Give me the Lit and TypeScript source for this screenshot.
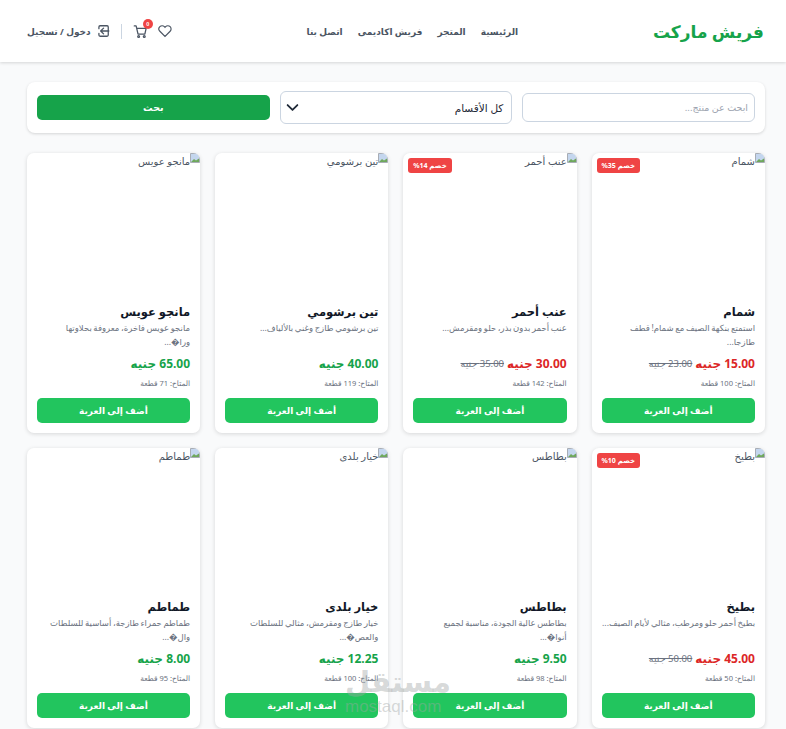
import { LitElement, html, css, svg } from "lit";
import { customElement } from "lit/decorators.js";

interface P { name: string; desc: string; price: string; old?: string; stock: string; badge?: string; }
const items: P[] = [
  { name: "شمام", desc: "استمتع بنكهة الصيف مع شمام! قطف\nطازجا...", price: "15.00 جنيه", old: "23.00 جنيه", stock: "المتاح: 100 قطعة", badge: "خصم 35%" },
  { name: "عنب أحمر", desc: "عنب أحمر بدون بذر، حلو ومقرمش...", price: "30.00 جنيه", old: "35.00 جنيه", stock: "المتاح: 142 قطعة", badge: "خصم 14%" },
  { name: "تين برشومي", desc: "تين برشومي طازج وغني بالألياف...", price: "40.00 جنيه", stock: "المتاح: 119 قطعة" },
  { name: "مانجو عويس", desc: "مانجو عويس فاخرة، معروفة بحلاوتها\nورا�...", price: "65.00 جنيه", stock: "المتاح: 71 قطعة" },
  { name: "بطيخ", desc: "بطيخ أحمر حلو ومرطب، مثالي لأيام الصيف...", price: "45.00 جنيه", old: "50.00 جنيه", stock: "المتاح: 50 قطعة", badge: "خصم 10%" },
  { name: "بطاطس", desc: "بطاطس عالية الجودة، مناسبة لجميع\nأنوا�...", price: "9.50 جنيه", stock: "المتاح: 98 قطعة" },
  { name: "خيار بلدى", desc: "خيار طازج ومقرمش، مثالي للسلطات\nوالعص�...", price: "12.25 جنيه", stock: "المتاح: 100 قطعة" },
  { name: "طماطم", desc: "طماطم حمراء طازجة، أساسية للسلطات\nوال�...", price: "8.00 جنيه", stock: "المتاح: 95 قطعة" },
];

const broken = svg`<svg class="broken" viewBox="0 0 10 10" width="10" height="10"><path d="M0.5 0.5h6.5l2.5 2.5v6.5h-9z" fill="#c4d6ee" stroke="#a8adb5"/><path d="M1 9l3-3 2 1.500 3-2v3.500z" fill="#6fa85c"/></svg>`;

@customElement("app-root")
export class AppRoot extends LitElement {
  static styles = css`
    :host { display: block; background: #f9fafb; font-family: "Noto Sans", "DejaVu Sans", sans-serif; color: #1f2937; position: relative; height: 729px; overflow: hidden; }
    .wrap { direction: rtl; }
    header { height: 62px; background: #fff; box-shadow: 0 1px 3px rgba(0,0,0,.15); display: flex; align-items: center; justify-content: space-between; padding: 0 22px 0 27px; }
    .logo { font-size: 17px; font-weight: 700; color: #16a34a; }
    nav { display: flex; gap: 15px; font-size: 9px; font-weight: 700; color: #4b5563; }
    .tools { display: flex; align-items: center; gap: 10px; color: #4b5563; }
    .tools svg { display: block; }
    .cart { position: relative; width: 15px; height: 15px; }
    .count { position: absolute; top: -5px; right: -5px; width: 10px; height: 10px; border-radius: 50%; background: #ef4444; color: #fff; font-size: 5.500px; line-height: 10px; text-align: center; font-family: "Liberation Sans", sans-serif; font-weight: 700; }
    .sep { width: 1px; height: 15px; margin: 0 1px; background: #cbd5e1; }
    .login { display: flex; align-items: center; gap: 5px; font-size: 9px; font-weight: 700; }
    main { padding: 20px 21px 0 27px; }
    .search { height: 51px; box-sizing: border-box; background: #fff; border-radius: 8px; box-shadow: 0 1px 3px rgba(0,0,0,.15); padding: 0 10px; display: grid; grid-template-columns: repeat(3, 1fr); gap: 10px; align-items: center; }
    .input { height: 27px; border: 1px solid #cbd5e1; border-radius: 6px; display: flex; align-items: center; padding: 0 6px; font-size: 9.500px; color: #9ca3af; }
    .select { height: 31px; border: 1px solid #cbd5e1; border-radius: 6px; display: flex; align-items: center; justify-content: space-between; padding: 0 8px 0 5px; font-size: 10.500px; color: #1f2937; }
    .go { height: 25px; background: #16a34a; border-radius: 5px; color: #fff; font-size: 9.500px; font-weight: 700; display: flex; align-items: center; justify-content: center; }
    .grid { margin-top: 20px; display: grid; grid-template-columns: repeat(4, 173.500px); gap: 15px 14.800px; }
    .card { height: 280px; position: relative; background: #fff; border-radius: 7px; box-shadow: 0 1px 4px rgba(0,0,0,.14); display: flex; flex-direction: column; overflow: hidden; }
    .img { height: 143px; display: flex; align-items: flex-start; font-size: 10px; color: #4b5563; line-height: 16px; }
    .broken { flex: none; }
    .badge { position: absolute; top: 5px; left: 5px; height: 15px; padding: 0 5px; background: #ef4444; color: #fff; border-radius: 3px; font-size: 7px; line-height: 15px; font-weight: 700; }
    .body { flex: 1; padding: 7px 10px 10px; display: flex; flex-direction: column; }
    h3 { margin: 0; font-size: 11.500px; line-height: 17px; font-weight: 700; color: #111827; }
    .desc { margin: 1px 0 0; height: 28px; font-size: 8.500px; line-height: 14px; word-spacing: -.6px; white-space: pre-line; color: #6b7280; }
    .price { margin-top: 5px; display: flex; gap: 3px; align-items: center; height: 18px; }
    .now { font-size: 12px; font-weight: 700; color: #16a34a; }
    .now.sale { color: #dc2626; }
    .old { font-size: 9.500px; color: #6b7280; text-decoration: line-through; }
    .stock { margin-top: 5px; font-size: 7.500px; line-height: 12px; color: #6b7280; }
    .add { margin-top: auto; height: 25px; background: #22c55e; border-radius: 5px; color: #fff; font-size: 9px; font-weight: 700; display: flex; align-items: center; justify-content: center; }
    .mark { position: absolute; left: 345px; top: 665px; width: 96px; text-align: center; color: rgba(160,165,165,.42); font-family: "Liberation Sans", sans-serif; line-height: 1; pointer-events: none; }
    .mark b { display: block; font-size: 29px; line-height: 32px; font-family: "Noto Sans", "DejaVu Sans", sans-serif; }
    .mark span { display: block; font-size: 17px; line-height: 14px; margin-top: 3px; }
  `;

  render() {
    return html`<div class="wrap">
      <header>
        <div class="logo">فريش ماركت</div>
        <nav><span>الرئيسية</span><span>المتجر</span><span>فريش اكاديمى</span><span>اتصل بنا</span></nav>
        <div class="tools">
          <svg width="14" height="14" viewBox="0 0 24 24" fill="none" stroke="#4b5563" stroke-width="2"><path d="M20.800 4.600a5.500 5.500 0 0 0-7.800 0L12 5.700l-1-1.100a5.500 5.500 0 0 0-7.800 7.800L12 21.200l8.800-8.800a5.500 5.500 0 0 0 0-7.800z"/></svg>
          <div class="cart">
            <svg width="15" height="15" viewBox="0 0 24 24" fill="none" stroke="#4b5563" stroke-width="2" stroke-linecap="round" stroke-linejoin="round"><path d="M2 3h3l3 13h11l2-9H6"/><circle cx="9" cy="20" r="1.500"/><circle cx="18" cy="20" r="1.500"/></svg>
            <span class="count">0</span>
          </div>
          <div class="sep"></div>
          <div class="login">
            <svg width="14" height="14" viewBox="0 0 24 24" fill="none" stroke="#4b5563" stroke-width="2.200" stroke-linecap="round" stroke-linejoin="round"><path d="M5 8V5a2 2 0 0 1 2-2h12a2 2 0 0 1 2 2v14a2 2 0 0 1-2 2H7a2 2 0 0 1-2-2v-3"/><path d="M22 12H9M13 7l-5 5 5 5"/></svg>
            <span>دخول / تسجيل</span>
          </div>
        </div>
      </header>
      <main>
        <div class="search">
          <div class="input">ابحث عن منتج...</div>
          <div class="select"><span>كل الأقسام</span>
            <svg width="13" height="13" viewBox="0 0 16 16" fill="none" stroke="#1f2937" stroke-width="2.200" stroke-linecap="round" stroke-linejoin="round"><path d="M2 5l6 6 6-6"/></svg></div>
          <div class="go">بحث</div>
        </div>
        <div class="grid">
          ${items.map((p) => html`<div class="card">
            <div class="img">${broken}<span>${p.name}</span></div>
            ${p.badge ? html`<span class="badge">${p.badge}</span>` : ""}
            <div class="body">
              <h3>${p.name}</h3>
              <p class="desc">${p.desc}</p>
              <div class="price"><span class="now ${p.old ? "sale" : ""}">${p.price}</span>${p.old ? html`<span class="old">${p.old}</span>` : ""}</div>
              <div class="stock">${p.stock}</div>
              <div class="add">أضف إلى العربة</div>
            </div>
          </div>`)}
        </div>
      </main>
    </div>
    <div class="mark"><b>مستقل</b><span>mostaql.com</span></div>`;
  }
}
